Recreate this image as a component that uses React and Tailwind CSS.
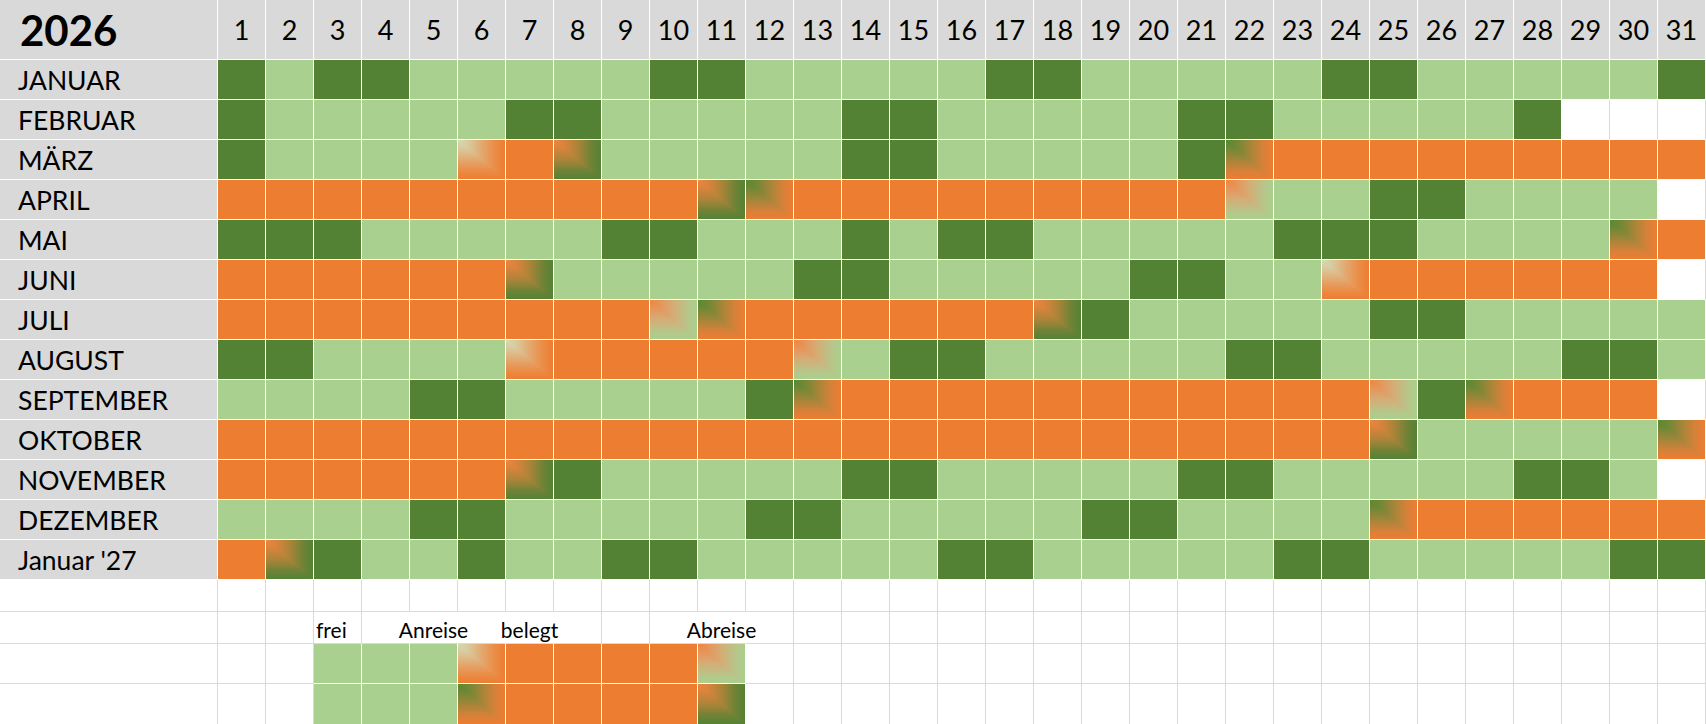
import React from "react";

const MONTHS = [
  ["JANUAR", "DLDDLLLLLDDLLLLLDDLLLLLDDLLLLLD"],
  ["FEBRUAR", "DLLLLLDDLLLLLDDLLLLLDDLLLLLDWWW"],
  ["MÄRZ", "DLLLLaOdLLLLLDDLLLLLDbOOOOOOOOO"],
  ["APRIL", "OOOOOOOOOOdbOOOOOOOOOcLLDDLLLLW"],
  ["MAI", "DDDLLLLLDDLLLDLDDLLLLLDDDLLLLbO"],
  ["JUNI", "OOOOOOdLLLLLDDLLLLLDDLLaOOOOOOW"],
  ["JULI", "OOOOOOOOOcbOOOOOOdDLLLLLDDLLLLL"],
  ["AUGUST", "DDLLLLaOOOOOcLDDLLLLLDDLLLLLDDL"],
  ["SEPTEMBER", "LLLLDDLLLLLDbOOOOOOOOOOOcDbOOOW"],
  ["OKTOBER", "O".repeat(24) + "dLLLLLb"],
  ["NOVEMBER", "OOOOOOdDLLLLLDDLLLLLDDLLLLLDDLW"],
  ["DEZEMBER", "LLLLDDLLLLLDDLLLLLDDLLLLbOOOOOO"],
  ["Januar '27", "OdDLLDLLDDLLLLLDDLLLLLDDLLLLLDD"],
];

const LEGEND1 = "  LLLaOOOOc" + " ".repeat(20);
const LEGEND2 = "  LLLbOOOOd" + " ".repeat(20);

const CELL = {
  D: "bg-[#548235] border-white",
  L: "bg-[#a9d08e] border-white",
  O: "bg-[#ed7d31] border-white",
  W: "bg-white border-r-[#dadada] border-b-white",
  " ": "border-[#dadada]",
};

// "from corner" gradients: square contours built from two triangles
const GRAD = {
  a: [
    "bg-[linear-gradient(to_right,#d3dbb0_0%,#d9c99c_22%,#e2ab74_48%,#ea904c_74%,#ed7d31_100%)]",
    "bg-[linear-gradient(to_bottom,#d3dbb0_0%,#d9c99c_22%,#e2ab74_48%,#ea904c_74%,#ed7d31_100%)]",
  ],
  b: [
    "bg-[linear-gradient(to_right,#58892f_0%,#738836_24%,#a68539_52%,#d5813a_78%,#ed7d31_100%)]",
    "bg-[linear-gradient(to_bottom,#58892f_0%,#738836_24%,#a68539_52%,#d5813a_78%,#ed7d31_100%)]",
  ],
  c: [
    "bg-[linear-gradient(to_right,#ed8640_0%,#e6955a_22%,#d5ad76_50%,#bbc287_76%,#a9d08e_100%)]",
    "bg-[linear-gradient(to_bottom,#ed8640_0%,#e6955a_22%,#d5ad76_50%,#bbc287_76%,#a9d08e_100%)]",
  ],
  d: [
    "bg-[linear-gradient(to_right,#ec8540_0%,#d6833b_24%,#a88438_52%,#718236_78%,#548235_100%)]",
    "bg-[linear-gradient(to_bottom,#ec8540_0%,#d6833b_24%,#a88438_52%,#718236_78%,#548235_100%)]",
  ],
};

const FONT = "font-['Lato','Noto_Sans',sans-serif]";

function DayCell({ code, last }) {
  const g = GRAD[code];
  if (g) {
    return (
      <div
        className={`w-[48px] shrink-0 h-full border-r border-white grid grid-cols-1 grid-rows-1 ${
          last ? "" : "border-b"
        }`}
      >
        <div
          className={`col-start-1 row-start-1 [clip-path:polygon(0_0,6%_0,100%_94%,100%_100%,0_100%)] ${g[1]}`}
        />
        <div className={`col-start-1 row-start-1 [clip-path:polygon(0_0,100%_0,100%_100%)] ${g[0]}`} />
      </div>
    );
  }
  return <div className={`w-[48px] shrink-0 h-full border-r ${last ? "" : "border-b"} ${CELL[code]}`} />;
}

function MonthRow({ name, days }) {
  return (
    <div className="flex h-[40px]">
      <div className="w-[218px] shrink-0 h-full bg-[#d9d9d9] border-r border-b border-white flex items-center pl-[18px] pt-[3px] text-[26.5px] text-black">
        {name}
      </div>
      {days.split("").map((c, i) => (
        <DayCell key={i} code={c} />
      ))}
    </div>
  );
}

function BlankRow({ h }) {
  return (
    <div className={`flex ${h}`}>
      <div className="w-[218px] shrink-0 h-full border-r border-b border-[#dadada]" />
      {Array.from({ length: 31 }).map((_, i) => (
        <div key={i} className="w-[48px] shrink-0 h-full border-r border-b border-[#dadada]" />
      ))}
    </div>
  );
}

function LegendRow({ pattern, last }) {
  return (
    <div className="flex h-[40px]">
      <div className={`w-[218px] shrink-0 h-full border-r border-[#dadada] ${last ? "" : "border-b"}`} />
      {pattern.split("").map((c, i) => (
        <DayCell key={i} code={c} last={last} />
      ))}
    </div>
  );
}

const TEXTS = { 3: ["frei", "left"], 5: ["Anreise", "center"], 7: ["belegt", "center"], 11: ["Abreise", "center"] };
const HIDDEN_RIGHT = new Set([4, 5, 6, 7, 10, 11]);

function TextRow() {
  return (
    <div className="flex h-[32px]">
      <div className="w-[218px] shrink-0 h-full border-r border-b border-[#dadada]" />
      {Array.from({ length: 31 }).map((_, i) => {
        const col = i + 1;
        const t = TEXTS[col];
        const hide = HIDDEN_RIGHT.has(col);
        return (
          <div
            key={i}
            className={`w-[48px] shrink-0 h-full border-b border-[#dadada] flex items-end pb-[3px] ${
              hide ? "border-r border-r-transparent" : "border-r"
            } ${t && t[1] === "center" ? "justify-center" : "justify-start pl-[2px]"}`}
          >
            {t && <span className="whitespace-nowrap text-[21px] leading-none text-black">{t[0]}</span>}
          </div>
        );
      })}
    </div>
  );
}

export default function App() {
  return (
    <div className={`w-[1706px] h-[724px] overflow-hidden bg-white ${FONT}`}>
      <div className="flex h-[60px]">
        <div className="w-[218px] shrink-0 h-full bg-[#d9d9d9] border-r border-b border-white flex items-center pl-[20px] pt-[2px] text-[42px] font-bold text-black">
          2026
        </div>
        {Array.from({ length: 31 }).map((_, i) => (
          <div
            key={i}
            className="w-[48px] shrink-0 h-full bg-[#d9d9d9] border-r border-b border-white flex items-center justify-center pt-[2px] text-[27px] text-black"
          >
            {i + 1}
          </div>
        ))}
      </div>
      {MONTHS.map(([name, days]) => (
        <MonthRow key={name} name={name} days={days} />
      ))}
      <BlankRow h="h-[32px]" />
      <TextRow />
      <LegendRow pattern={LEGEND1} />
      <LegendRow pattern={LEGEND2} last />
    </div>
  );
}
